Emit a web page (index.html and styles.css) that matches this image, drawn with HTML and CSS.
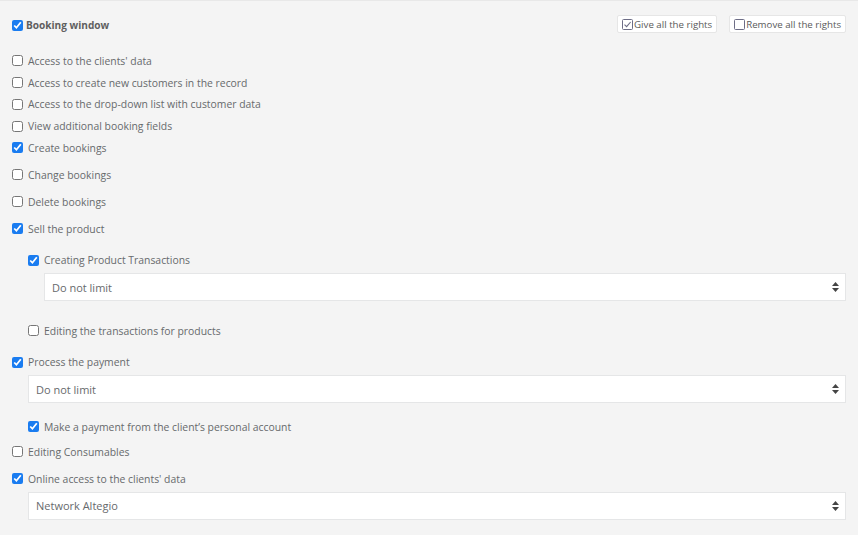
FILE: index.html
```html
<!DOCTYPE html>
<html lang="en">
<head>
  <meta charset="UTF-8">
  <title>Access rights</title>
  <link rel="stylesheet" href="styles.css">
</head>
<body>
  <div class="rights">
    <div class="rights-head">
      <label class="title"><input type="checkbox" checked> Booking window</label>
      <div class="bulk">
        <button class="bulk-btn">
          <svg width="11" height="11" viewBox="0 0 11 11"><rect x="0.5" y="0.5" width="10" height="10" rx="1" fill="none" stroke="#6d6d86"/><path d="M2.5 5.6 L4.6 7.6 L8.6 3" fill="none" stroke="#6d6d86" stroke-width="1.1"/></svg>
          Give all the rights
        </button>
        <button class="bulk-btn">
          <svg width="11" height="11" viewBox="0 0 11 11"><rect x="0.5" y="0.5" width="10" height="10" rx="1" fill="none" stroke="#6d6d86"/></svg>
          Remove all the rights
        </button>
      </div>
    </div>

    <div class="group">
      <label class="perm"><input type="checkbox"> Access to the clients' data</label>
      <label class="perm"><input type="checkbox"> Access to create new customers in the record</label>
      <label class="perm"><input type="checkbox"> Access to the drop-down list with customer data</label>
      <label class="perm"><input type="checkbox"> View additional booking fields</label>
      <label class="perm"><input type="checkbox" checked> Create bookings</label>
    </div>

    <label class="perm spaced"><input type="checkbox"> Change bookings</label>
    <label class="perm spaced"><input type="checkbox"> Delete bookings</label>
    <label class="perm spaced"><input type="checkbox" checked> Sell the product</label>

    <div class="sub">
      <label class="perm gap-m"><input type="checkbox" checked> Creating Product Transactions</label>
      <div class="select">
        <span>Do not limit</span>
        <svg width="7" height="10" viewBox="0 0 7 10"><path d="M3.5 0 L7 4 L0 4 Z M0 6 L7 6 L3.5 10 Z" fill="#444"/></svg>
      </div>
      <label class="perm gap-l"><input type="checkbox"> Editing the transactions for products</label>
    </div>

    <label class="perm gap-m"><input type="checkbox" checked> Process the payment</label>
    <div class="select">
      <span>Do not limit</span>
      <svg width="7" height="10" viewBox="0 0 7 10"><path d="M3.5 0 L7 4 L0 4 Z M0 6 L7 6 L3.5 10 Z" fill="#444"/></svg>
    </div>

    <div class="sub">
      <label class="perm gap-s"><input type="checkbox" checked> Make a payment from the client’s personal account</label>
    </div>

    <label class="perm gap-xs"><input type="checkbox"> Editing Consumables</label>
    <label class="perm spaced"><input type="checkbox" checked> Online access to the clients' data</label>
    <div class="select">
      <span>Network Altegio</span>
      <svg width="7" height="10" viewBox="0 0 7 10"><path d="M3.5 0 L7 4 L0 4 Z M0 6 L7 6 L3.5 10 Z" fill="#444"/></svg>
    </div>
  </div>
</body>
</html>
```

FILE: styles.css
```css
body {
  margin: 0;
  background: #f4f4f4;
  font-family: "Open Sans", "Liberation Sans", sans-serif;
  font-size: 10.4px;
  color: #676a6c;
}
.rights {
  border-top: 1px solid #e8e8e8;
  padding: 0 12px 0 12px;
}
.rights-head {
  display: flex;
  justify-content: space-between;
  align-items: center;
  padding-top: 14px;
  height: 18px;
  margin-bottom: 17px;
}
.title {
  display: flex;
  align-items: center;
  gap: 3px;
  font-size: 10.1px;
  font-weight: bold;
  color: #5f5f5f;
  padding-top: 2px;
}
.bulk {
  display: flex;
  gap: 12px;
}
.bulk-btn {
  display: flex;
  align-items: center;
  gap: 1px;
  height: 18px;
  padding: 0 4px 0 4px;
  background: #fff;
  border: 1px solid #e6e6e6;
  border-radius: 2px;
  font-family: inherit;
  font-size: 9.7px;
  color: #5a5a5a;
}
input[type="checkbox"] {
  width: 11px;
  height: 11px;
  margin: 0;
  accent-color: #1a7cf0;
}
.perm {
  display: flex;
  align-items: center;
  gap: 5px;
  height: 21.75px;
}
.spaced {
  margin-top: 5.25px;
}
.gap-xs { margin-top: 3px; }
.gap-s { margin-top: 13px; }
.gap-m { margin-top: 9.5px; }
.gap-l { margin-top: 19px; }
.sub {
  padding-left: 16px;
}
.select {
  display: flex;
  justify-content: space-between;
  align-items: center;
  height: 26px;
  margin: 2px 0 0 16px;
  padding: 0 6px 0 7px;
  background: #fff;
  border: 1px solid #e5e6e7;
  font-size: 11px;
  color: #676a6c;
}
```
